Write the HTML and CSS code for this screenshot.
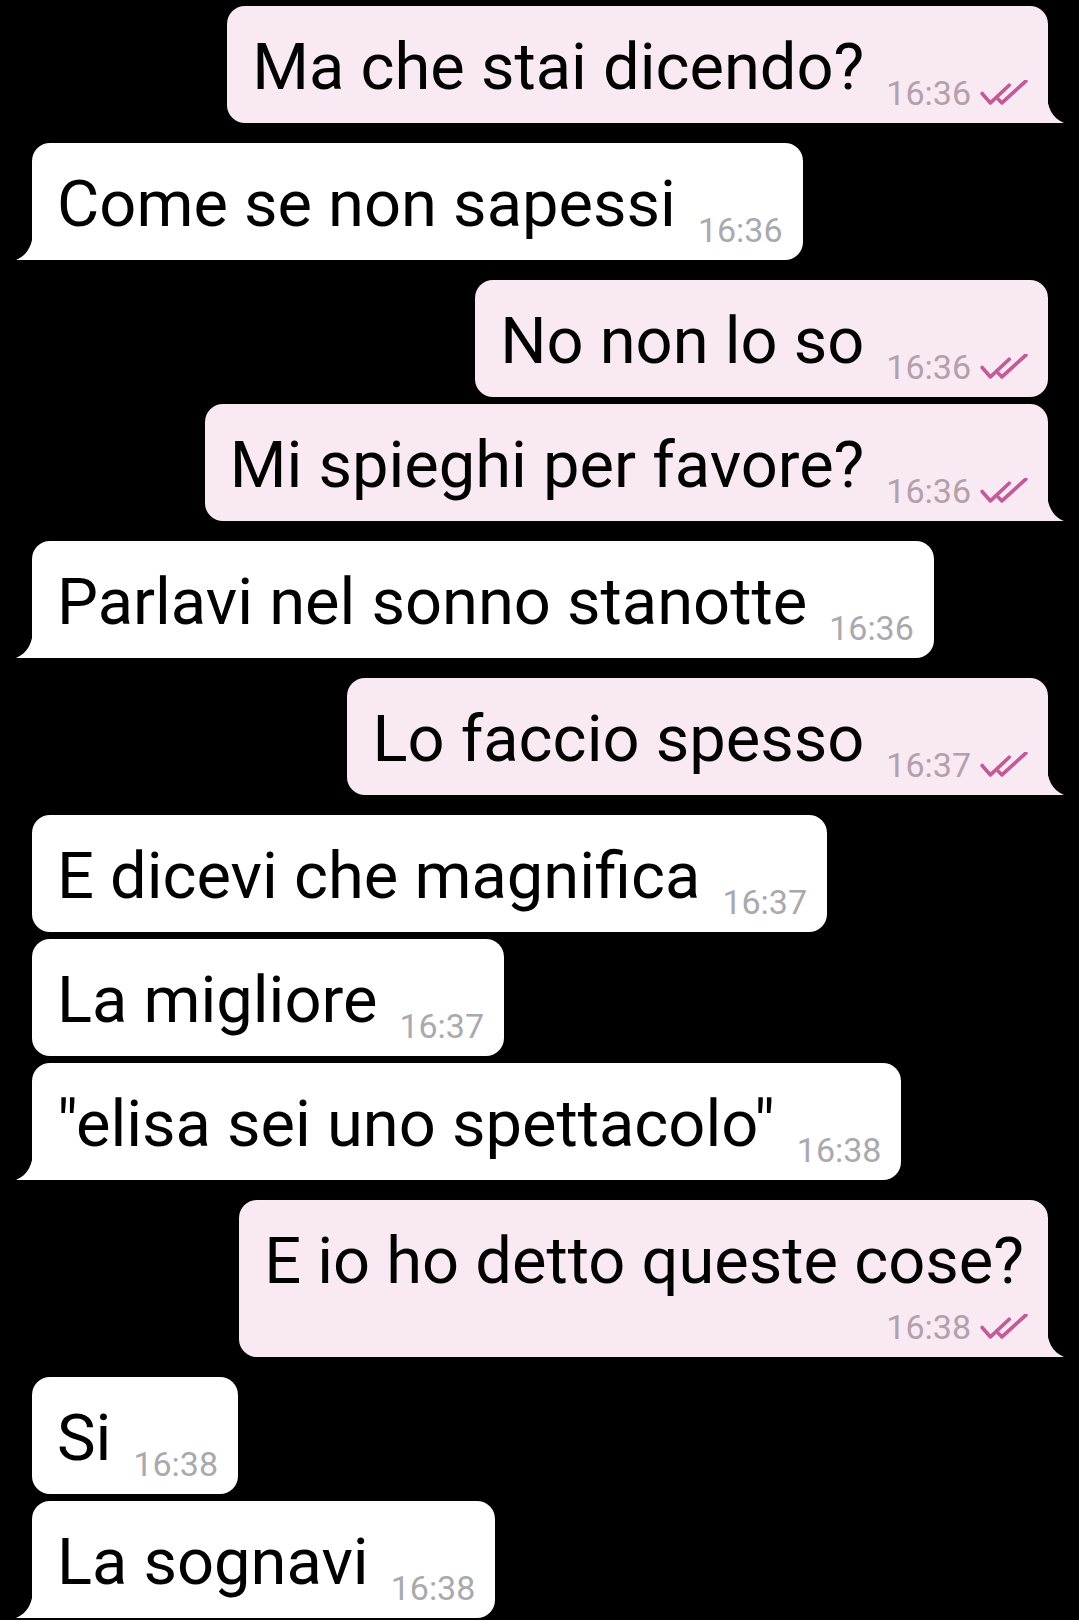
FILE: index.html
```html
<!DOCTYPE html>
<html lang="it">
<head>
<meta charset="utf-8">
<title>Chat</title>
<link rel="stylesheet" href="styles.css">
</head>
<body>
<div class="chat">
  <div class="msg out tail">
    <span class="text">Ma che stai dicendo?</span>
    <span class="meta"><span class="time">16:36</span><svg class="ticks" viewBox="0 0 46 24"><path d="M2 13 L10 22 L28 5 M18 19 L21 22 L44 1"/></svg></span>
    <svg class="tail-shape" viewBox="0 0 17 30"><path d="M0 0 C0 14 5 25 17 30 L0 30 Z"/></svg>
  </div>
  <div class="msg in tail group">
    <span class="text">Come se non sapessi</span>
    <span class="meta"><span class="time">16:36</span></span>
    <svg class="tail-shape" viewBox="0 0 17 30"><path d="M17 0 C17 14 12 25 0 30 L17 30 Z"/></svg>
  </div>
  <div class="msg out group">
    <span class="text">No non lo so</span>
    <span class="meta"><span class="time">16:36</span><svg class="ticks" viewBox="0 0 46 24"><path d="M2 13 L10 22 L28 5 M18 19 L21 22 L44 1"/></svg></span>
  </div>
  <div class="msg out tail">
    <span class="text">Mi spieghi per favore?</span>
    <span class="meta"><span class="time">16:36</span><svg class="ticks" viewBox="0 0 46 24"><path d="M2 13 L10 22 L28 5 M18 19 L21 22 L44 1"/></svg></span>
    <svg class="tail-shape" viewBox="0 0 17 30"><path d="M0 0 C0 14 5 25 17 30 L0 30 Z"/></svg>
  </div>
  <div class="msg in tail group">
    <span class="text">Parlavi nel sonno stanotte</span>
    <span class="meta"><span class="time">16:36</span></span>
    <svg class="tail-shape" viewBox="0 0 17 30"><path d="M17 0 C17 14 12 25 0 30 L17 30 Z"/></svg>
  </div>
  <div class="msg out tail group">
    <span class="text">Lo faccio spesso</span>
    <span class="meta"><span class="time">16:37</span><svg class="ticks" viewBox="0 0 46 24"><path d="M2 13 L10 22 L28 5 M18 19 L21 22 L44 1"/></svg></span>
    <svg class="tail-shape" viewBox="0 0 17 30"><path d="M0 0 C0 14 5 25 17 30 L0 30 Z"/></svg>
  </div>
  <div class="msg in group">
    <span class="text">E dicevi che magnifica</span>
    <span class="meta"><span class="time">16:37</span></span>
  </div>
  <div class="msg in">
    <span class="text">La migliore</span>
    <span class="meta"><span class="time">16:37</span></span>
  </div>
  <div class="msg in tail">
    <span class="text">"elisa sei uno spettacolo"</span>
    <span class="meta"><span class="time">16:38</span></span>
    <svg class="tail-shape" viewBox="0 0 17 30"><path d="M17 0 C17 14 12 25 0 30 L17 30 Z"/></svg>
  </div>
  <div class="msg out tail group stacked">
    <span class="text">E io ho detto queste cose?</span>
    <span class="meta"><span class="time">16:38</span><svg class="ticks" viewBox="0 0 46 24"><path d="M2 13 L10 22 L28 5 M18 19 L21 22 L44 1"/></svg></span>
    <svg class="tail-shape" viewBox="0 0 17 30"><path d="M0 0 C0 14 5 25 17 30 L0 30 Z"/></svg>
  </div>
  <div class="msg in group">
    <span class="text">Si</span>
    <span class="meta"><span class="time">16:38</span></span>
  </div>
  <div class="msg in tail">
    <span class="text">La sognavi</span>
    <span class="meta"><span class="time">16:38</span></span>
    <svg class="tail-shape" viewBox="0 0 17 30"><path d="M17 0 C17 14 12 25 0 30 L17 30 Z"/></svg>
  </div>
</div>
</body>
</html>
```
FILE: styles.css
```css
html, body {
  margin: 0;
  background: #000;
}

body {
  font-family: Roboto, "Noto Sans", sans-serif;
}

.chat {
  display: flex;
  flex-direction: column;
  padding: 6px 31px 0 32px;
}

.msg {
  position: relative;
  display: flex;
  align-items: flex-end;
  border-radius: 18px;
  margin-top: 7px;
}

.msg:first-child {
  margin-top: 0;
}

.msg.group {
  margin-top: 20px;
}

.msg.out {
  align-self: flex-end;
  background: #f8e9f2;
}

.msg.in {
  align-self: flex-start;
  background: #ffffff;
}

.text {
  font-size: 65px;
  line-height: 76px;
  color: #000;
  white-space: nowrap;
  padding: 23px 0 18px 25px;
}

.meta {
  display: flex;
  align-items: flex-end;
  padding: 0 20px 11px 22px;
  line-height: 37px;
}

.time {
  font-size: 34px;
  color: #b3a0ac;
}

.msg.in .time {
  color: #a9a9ae;
}

.ticks {
  width: 48px;
  height: 25px;
  margin: 0 0 7px 9px;
  fill: none;
  stroke: #c45a9a;
  stroke-width: 3.5;
  stroke-linecap: round;
  stroke-linejoin: round;
}

.tail-shape {
  position: absolute;
  bottom: 0;
  width: 17px;
  height: 30px;
}

.msg.out.tail {
  border-bottom-right-radius: 0;
}

.msg.out .tail-shape {
  right: -16px;
  fill: #f8e9f2;
}

.msg.in.tail {
  border-bottom-left-radius: 0;
}

.msg.in .tail-shape {
  left: -16px;
  fill: #ffffff;
}

.msg.stacked {
  flex-direction: column;
  align-items: flex-end;
}

.msg.stacked .text {
  align-self: flex-start;
  padding: 23px 24px 10px 25px;
}

.msg.stacked .meta {
  padding-left: 0;
}
```
